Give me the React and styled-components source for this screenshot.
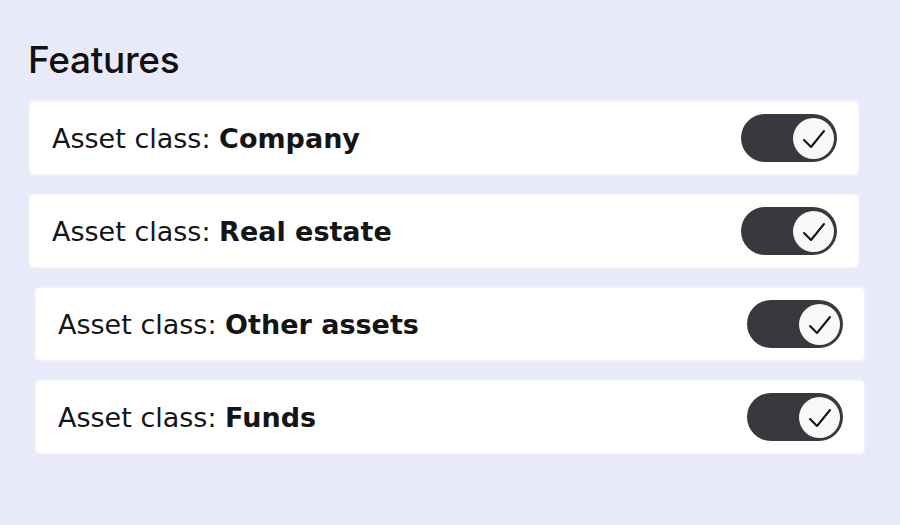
import React from 'react'
import styled, {createGlobalStyle} from 'styled-components'

const GlobalStyle = createGlobalStyle`
  html, body {
    margin: 0;
    padding: 0;
    background: #e9eaf9;
  }
  body {
    font-family: "DejaVu Sans", "Noto Sans", sans-serif;
    color: #111;
  }
`

const Page = styled.div`
  width: 900px;
  height: 525px;
  box-sizing: border-box;
  padding: 36px 0 0 28px;
  background: #e9eaf9;
`

const Title = styled.h2`
  margin: 0 0 16px;
  font-family: Inter, "Noto Sans", sans-serif;
  font-weight: 500;
  font-size: 37px;
  line-height: 48px;
  letter-spacing: -0.3px;
  color: #111;
`

const List = styled.div`
  display: flex;
  flex-direction: column;
  gap: 17px;
`

const Card = styled.div`
  display: flex;
  align-items: center;
  justify-content: space-between;
  box-sizing: border-box;
  width: 832px;
  height: 76px;
  margin-left: ${p => p.shift || 0}px;
  padding: 0 21px 0 22px;
  background: #fff;
  border: 2px solid #f1f1f6;
  border-radius: 6px;
`

const Label = styled.span`
  font-size: 27px;
  line-height: 32px;
  padding-top: 2px;
  font-weight: 400;
  color: #151515;
  b {
    font-weight: 700;
  }
`

const Switch = styled.button`
  position: relative;
  width: 96px;
  height: 48px;
  padding: 0;
  border: none;
  border-radius: 24px;
  background: #3a383e;
  cursor: pointer;
`

const Knob = styled.span`
  position: absolute;
  top: 4px;
  right: 3px;
  width: 41px;
  height: 41px;
  border-radius: 50%;
  background: #f8f8f8;
  display: flex;
  align-items: center;
  justify-content: center;
`

const Check = () => (
  <svg width="26" height="26" viewBox="0 0 26 26" fill="none">
    <path d="M3 14 L10 21 L23 5" stroke="#111" strokeWidth="2" strokeLinecap="round" strokeLinejoin="round" />
  </svg>
)

const items = [
  {name: 'Company', shift: 0},
  {name: 'Real estate', shift: 0},
  {name: 'Other assets', shift: 6},
  {name: 'Funds', shift: 6},
]

const App = () => (
  <Page>
    <GlobalStyle />
    <Title>Features</Title>
    <List>
      {items.map(item => (
        <Card key={item.name} shift={item.shift}>
          <Label>Asset class: <b>{item.name}</b></Label>
          <Switch aria-pressed="true">
            <Knob><Check /></Knob>
          </Switch>
        </Card>
      ))}
    </List>
  </Page>
)

export default App
